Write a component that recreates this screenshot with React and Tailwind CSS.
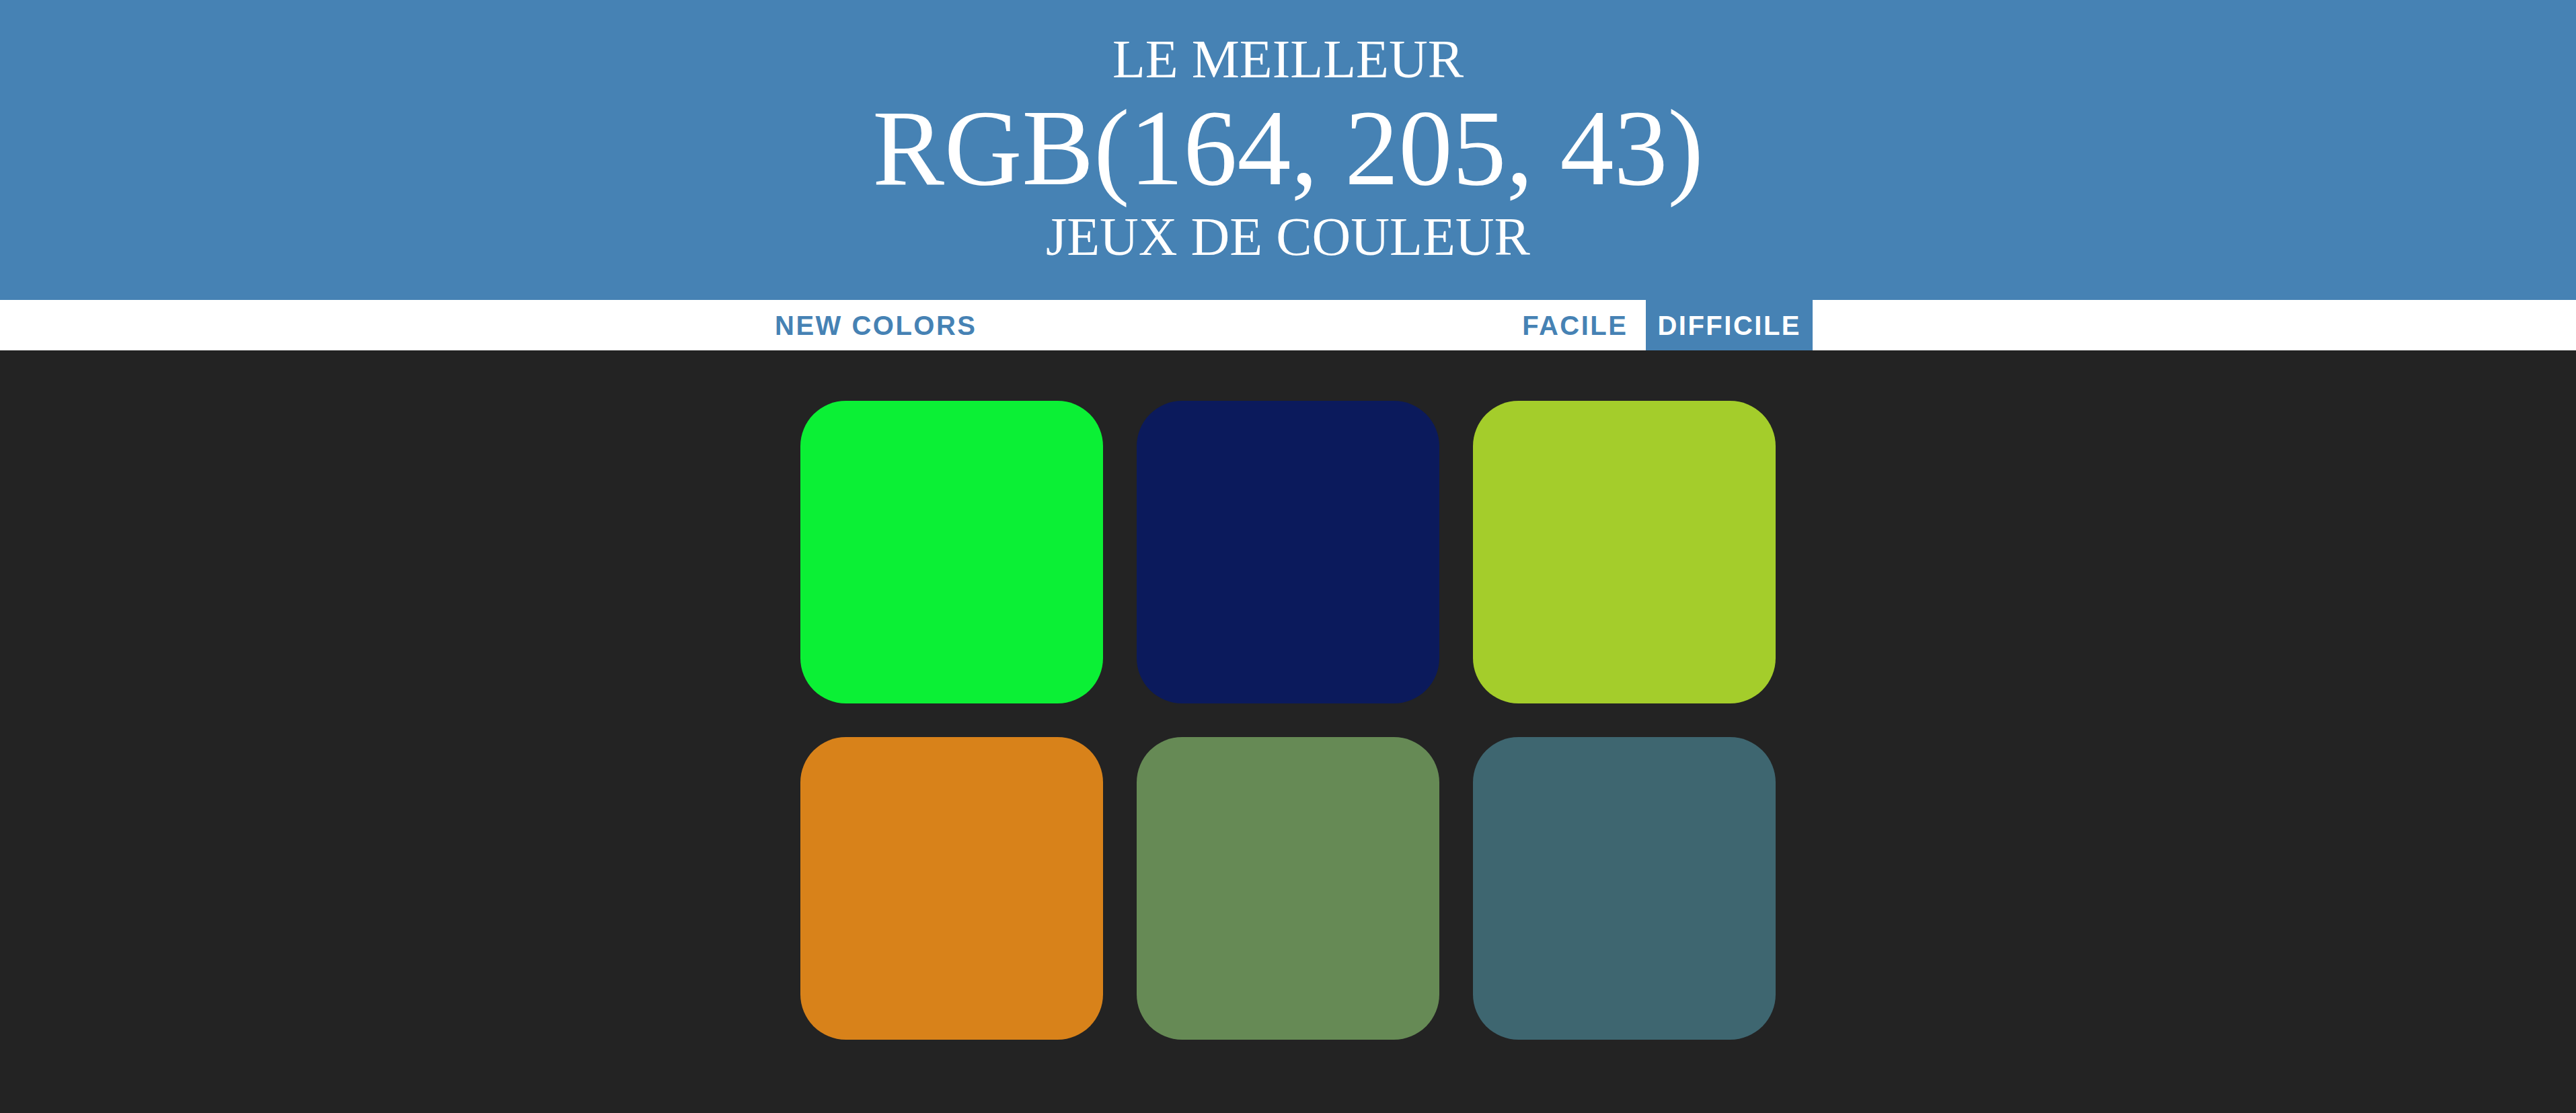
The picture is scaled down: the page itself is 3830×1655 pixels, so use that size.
const squares = ['bg-[#0bf035]', 'bg-[#0b1a5c]', 'bg-[#a4cd2b]', 'bg-[#d8821a]', 'bg-[#668a55]', 'bg-[#3e6670]'];

export default function App() {
    return (
        <div className="min-h-screen bg-[#232323]">
            <header className="bg-[#4682b4] pt-[44px] pb-[50px] text-center text-white font-['Liberation_Serif',serif] font-normal uppercase leading-[1.1]">
                <div className="text-[80px]">Le meilleur</div>
                <div className="text-[160px]">RGB(164, 205, 43)</div>
                <div className="text-[80px]">Jeux de couleur</div>
            </header>
            <nav className="bg-white h-[75px]">
                <div className="w-[1560px] h-full mx-auto flex items-stretch font-['Liberation_Sans',Arial,sans-serif] font-bold text-[40px] tracking-[2.5px]">
                    <button className="px-[17px] uppercase text-[#4682b4]">New Colors</button>
                    <button className="ml-auto mr-[10px] px-[17px] uppercase text-[#4682b4]">Facile</button>
                    <button className="px-[17px] uppercase bg-[#4682b4] text-white">Difficile</button>
                </div>
            </nav>
            <main className="w-[1500px] mx-auto pt-[75px] flex flex-wrap">
                {squares.map((c, i) => (
                    <div key={i} className={`w-[450px] h-[450px] mx-[25px] mb-[50px] rounded-[15%] ${c}`} />
                ))}
            </main>
        </div>
    );
}
